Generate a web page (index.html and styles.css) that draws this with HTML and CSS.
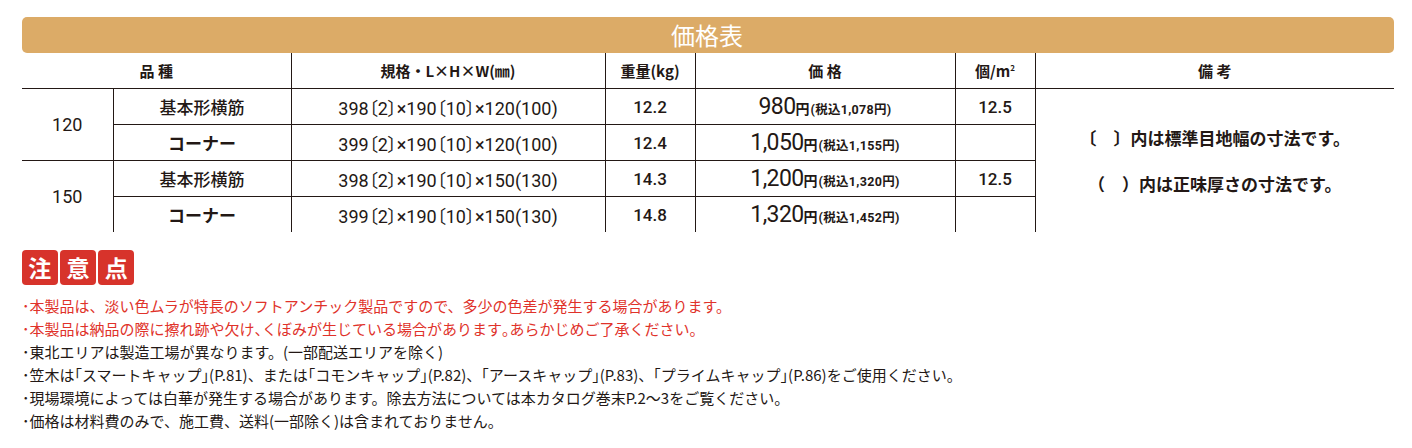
FILE: index.html
```html
<!DOCTYPE html>
<html lang="ja">
<head>
<meta charset="utf-8">
<title>価格表</title>
<link rel="stylesheet" href="styles.css">
</head>
<body>
<div class="page">
  <div class="title-bar">価格表</div>
  <table class="price-table">
    <colgroup>
      <col class="c-size">
      <col class="c-name">
      <col class="c-spec">
      <col class="c-weight">
      <col class="c-price">
      <col class="c-per">
      <col class="c-note">
    </colgroup>
    <thead>
      <tr>
        <th colspan="2">品 種</th>
        <th>規格・L×H×W(㎜)</th>
        <th>重量(kg)</th>
        <th>価 格</th>
        <th>個/m<sup>2</sup></th>
        <th>備 考</th>
      </tr>
    </thead>
    <tbody>
      <tr>
        <td rowspan="2" class="size">120</td>
        <td class="name">基本形横筋</td>
        <td class="spec">398〔2〕×190〔10〕×120(100)</td>
        <td class="num">12.2</td>
        <td class="price"><span class="amt">980</span><span class="yen">円</span><span class="tax">(税込1,078円)</span></td>
        <td class="num">12.5</td>
        <td rowspan="4" class="note">
          <p>〔　〕内は標準目地幅の寸法です。</p>
          <p>（　）内は正味厚さの寸法です。</p>
        </td>
      </tr>
      <tr>
        <td class="name corner">コーナー</td>
        <td class="spec">399〔2〕×190〔10〕×120(100)</td>
        <td class="num">12.4</td>
        <td class="price"><span class="amt">1,050</span><span class="yen">円</span><span class="tax">(税込1,155円)</span></td>
        <td class="num"></td>
      </tr>
      <tr>
        <td rowspan="2" class="size">150</td>
        <td class="name">基本形横筋</td>
        <td class="spec">398〔2〕×190〔10〕×150(130)</td>
        <td class="num">14.3</td>
        <td class="price"><span class="amt">1,200</span><span class="yen">円</span><span class="tax">(税込1,320円)</span></td>
        <td class="num">12.5</td>
      </tr>
      <tr>
        <td class="name corner">コーナー</td>
        <td class="spec">399〔2〕×190〔10〕×150(130)</td>
        <td class="num">14.8</td>
        <td class="price"><span class="amt">1,320</span><span class="yen">円</span><span class="tax">(税込1,452円)</span></td>
        <td class="num"></td>
      </tr>
    </tbody>
  </table>

  <section class="notice">
    <div class="badges"><span class="badge">注</span><span class="badge">意</span><span class="badge">点</span></div>
    <ul class="notes">
      <li class="warn">･本製品は、淡い色ムラが特長のソフトアンチック製品ですので、多少の色差が発生する場合があります。</li>
      <li class="warn">･本製品は納品の際に擦れ跡や欠け<span class="pk">、</span>くぼみが生じている場合があります<span class="pk">。</span>あらかじめご了承ください。</li>
      <li>･東北エリアは製造工場が異なります。(一部配送エリアを除く)</li>
      <li>･笠木は<span class="pk">「</span>スマートキャップ<span class="pk">」</span>(P.81)、または<span class="pk">「</span>コモンキャップ<span class="pk">」</span>(P.82)、<span class="pk">「</span>アースキャップ<span class="pk">」</span>(P.83)、<span class="pk">「</span>プライムキャップ<span class="pk">」</span>(P.86)をご使用ください。</li>
      <li>･現場環境によっては白華が発生する場合があります。除去方法については本カタログ巻末P.2～3をご覧ください。</li>
      <li>･価格は材料費のみで、施工費、送料(一部除く)は含まれておりません。</li>
    </ul>
  </section>
</div>
</body>
</html>
```

FILE: styles.css
```css
html, body {
  margin: 0;
  padding: 0;
  background: #ffffff;
}

body {
  font-family: "Noto Sans CJK JP", sans-serif;
  color: #231815;
}

.page {
  width: 1372px;
  padding: 17px 0 0 22px;
}

.title-bar {
  height: 36px;
  background: #dcab67;
  border-radius: 5px;
  color: #ffffff;
  font-size: 24px;
  line-height: 36px;
  text-align: center;
  padding-right: 2px;
}

.price-table {
  width: 1372px;
  table-layout: fixed;
  border-collapse: collapse;
  border-style: hidden;
}

.c-size { width: 91px; }
.c-name { width: 178px; }
.c-spec { width: 314px; }
.c-weight { width: 90px; }
.c-price { width: 260px; }
.c-per { width: 80px; }
.c-note { width: 359px; }

.price-table th,
.price-table td {
  border: 1px solid #231815;
  padding: 0;
  height: 35px;
  text-align: center;
  vertical-align: middle;
}

.price-table th {
  font-size: 15px;
  font-weight: 700;
  line-height: 20px;
}

.price-table th sup {
  font-size: 8px;
  vertical-align: top;
  position: relative;
  top: -3px;
}

.size {
  font-family: Roboto, "Noto Sans CJK JP", sans-serif;
  font-size: 18px;
}

.name {
  font-size: 17px;
  font-weight: 500;
}

.name.corner {
  font-weight: 700;
}

.spec {
  font-family: Roboto, "Noto Sans CJK JP", sans-serif;
  font-size: 18px;
  font-feature-settings: "palt";
}

.num {
  font-family: Roboto, "Noto Sans CJK JP", sans-serif;
  font-size: 17px;
  font-weight: 500;
}

.price {
  font-family: Roboto, "Noto Sans CJK JP", sans-serif;
  white-space: nowrap;
  padding-left: 2px;
}

.price .amt {
  font-size: 23px;
  letter-spacing: -0.6px;
}

.price .yen {
  font-family: "Noto Sans CJK JP", sans-serif;
  font-size: 14px;
  font-weight: 700;
}

.price .tax {
  font-size: 12.5px;
  font-weight: 700;
  letter-spacing: 0.3px;
  margin-left: 1px;
}

.note {
  padding-right: 2px;
}

.note p {
  margin: 0;
  font-size: 17px;
  font-weight: 700;
  line-height: 23px;
}

.note p + p {
  margin-top: 23px;
}

.notice {
  margin-top: 18px;
}

.badges {
  display: flex;
  gap: 2.5px;
}

.badge {
  width: 35.7px;
  height: 35px;
  background: #d7332b;
  border-radius: 4px;
  color: #ffffff;
  font-size: 23px;
  font-weight: 700;
  line-height: 35px;
  text-align: center;
}

.notes {
  list-style: none;
  margin: 9px 0 0;
  padding: 0;
  font-size: 15px;
  line-height: 23px;
  white-space: nowrap;
}

.notes .warn {
  color: #e0322a;
}

.notes .pk {
  font-feature-settings: "halt";
}
```
